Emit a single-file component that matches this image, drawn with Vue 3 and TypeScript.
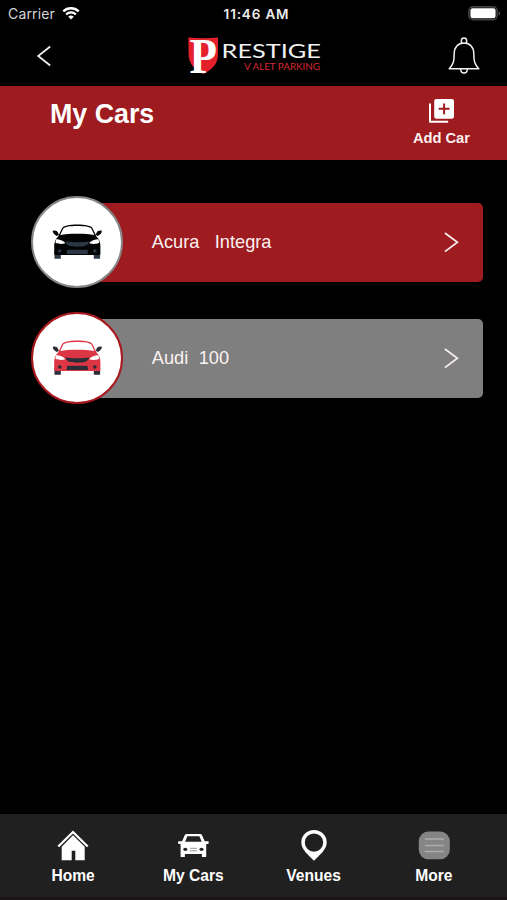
<script setup lang="ts">
interface Car {
  id: number
  make: string
  model: string
  gap: number
  variant: 'red' | 'gray'
  body: string
  trim: string
  detail: string
}

const cars: Car[] = [
  { id: 1, make: 'Acura', model: 'Integra', gap: 15.5, variant: 'red', body: '#020305', trim: '#2c3745', detail: '#020305' },
  { id: 2, make: 'Audi', model: '100', gap: 10.5, variant: 'gray', body: '#dc3543', trim: '#2b2d38', detail: '#2b2d38' },
]

type TabIcon = 'home' | 'car' | 'pin' | 'more'
const tabs: { label: string; icon: TabIcon }[] = [
  { label: 'Home', icon: 'home' },
  { label: 'My Cars', icon: 'car' },
  { label: 'Venues', icon: 'pin' },
  { label: 'More', icon: 'more' },
]
</script>

<template>
  <div class="screen">
    <div class="status">
      <div class="carrier">
        <span>Carrier</span>
        <svg width="18" height="13" viewBox="0 0 18 13">
          <path d="M1.300 4.400a11 11 0 0 1 15.400 0" fill="none" stroke="#fff" stroke-width="2.300" />
          <path d="M4.100 7.400a7 7 0 0 1 9.800 0" fill="none" stroke="#fff" stroke-width="2.100" />
          <path d="M9 12.600 6.200 9.800a4 4 0 0 1 5.600 0z" fill="#fff" />
        </svg>
      </div>
      <time class="clock">11:46 AM</time>
      <svg class="battery" width="33" height="15" viewBox="0 0 33 15">
        <rect x=".9" y=".9" width="28.200" height="12.800" rx="4" fill="none" stroke="#414143" stroke-width="1.600" />
        <rect x="2.400" y="2.300" width="25.200" height="10" rx="2.200" fill="#fff" />
        <path d="M30.600 5.200c2 .8 2 3.600 0 4.400z" fill="#5c5c5e" />
      </svg>
    </div>

    <header class="header">
      <button class="icon-btn back" aria-label="Back">
        <svg width="16" height="22" viewBox="0 0 16 22">
          <path d="M14.200 1.500 2.200 11l12 9.500" fill="none" stroke="#f4f4f4" stroke-width="1.700" />
        </svg>
      </button>
      <svg class="logo" width="136" height="40" viewBox="0 0 136 40">
        <path d="M1.300 1.500Q16 2.800 31 1.500V18C31 28 25 34 16 38 7 34 2 27 1.600 19z" fill="#e3202b" />
        <text class="logo-p" x="2.400" y="37" textLength="27.500" lengthAdjust="spacingAndGlyphs">P</text>
        <text class="logo-name" x="34.500" y="22.300" textLength="99.500" lengthAdjust="spacingAndGlyphs">RESTIGE</text>
        <text class="logo-sub" x="57" y="34" textLength="76" lengthAdjust="spacingAndGlyphs">V ALET PARKING</text>
      </svg>
      <button class="icon-btn bell" aria-label="Notifications">
        <svg width="34" height="40" viewBox="0 0 34 40" fill="none" stroke="#f2f2f2" stroke-width="1.500">
          <path d="M14.400 7.200V4.500a2.600 2.600 0 0 1 5.200 0v2.700" />
          <path d="M2.200 32.800C6.300 28.500 7.200 25.500 7.200 17.500c0-6.200 3.800-10.500 9.800-10.500s9.800 4.300 9.800 10.500c0 8 .9 11 5 15.300z" stroke-linejoin="round" />
          <path d="M13.700 33c0 5.400 6.600 5.400 6.600 0" />
        </svg>
      </button>
    </header>

    <section class="title-bar">
      <h1>My Cars</h1>
      <button class="add">
        <svg width="26" height="26" viewBox="0 0 26 26">
          <path d="M2 5.500v18.200h18.200" fill="none" stroke="#fff" stroke-width="2" stroke-linejoin="round" />
          <rect x="6.200" y=".9" width="19.800" height="19.800" rx="2.200" fill="#fff" />
          <path d="M16.100 5.400v10.800M10.700 10.800h10.800" stroke="#9e1b1f" stroke-width="2" />
        </svg>
        <span>Add Car</span>
      </button>
    </section>

    <main class="list">
      <article v-for="car in cars" :key="car.id" class="car" :class="car.variant">
        <div class="avatar">
          <svg width="52" height="38" viewBox="0 0 52 38">
            <g transform="translate(1.300 1.200)">
              <path d="M2.200 27.500h6.300v7H2.200zM41.500 27.500h6.300v7h-6.300z" :fill="car.trim" />
              <path d="M.4 6.700c1.800-.9 4.700 0 5.300 1.900l.9 1.900-2.200 1.200C2.500 10.200.6 9.200.4 6.700zM49.600 6.700c-1.800-.9-4.700 0-5.300 1.900l-.9 1.900 2.200 1.200c1.900-1.500 3.800-2.500 4-5z" :fill="car.detail" />
              <path d="M5.800 12.200 9.600 4.300C10.800 1.500 17 .4 25 .4s14.200 1.100 15.400 3.900L44.200 12.200c2.600 2.600 3.900 5.600 3.900 9.300v7.700c0 1-.7 1.600-1.700 1.600H3.600c-1 0-1.700-.6-1.700-1.600v-7.700c0-3.700 1.300-6.700 3.900-9.300z" :fill="car.body" />
              <path d="M7.900 10.800 11 4.400C12.200 2.300 18 1.700 25 1.700s12.800.6 14 2.700l3.100 6.400c-4-.8-10.200-1.200-17.100-1.200s-13.100.4-17.100 1.200z" fill="#fff" />
              <path d="M3.800 15.100c3.600.2 7.700 1.400 9.200 4-3.200.9-7.300.8-9.900-.6zM46.200 15.100c-3.600.2-7.700 1.400-9.200 4 3.200.9 7.300.8 9.900-.6z" fill="#fff" />
              <path d="M13 17.300c6 1 18 1 24 0-1.200 3.600-4 5.200-12 5.200s-10.800-1.600-12-5.200z" :fill="car.trim" />
              <path d="M14.800 25.500h20.400l.5 4.200H14.300z" :fill="car.trim" />
              <circle cx="7.500" cy="26.800" r="1.800" :fill="car.trim" />
              <circle cx="42.500" cy="26.800" r="1.800" :fill="car.trim" />
            </g>
          </svg>
        </div>
        <p class="name" :style="{ gap: car.gap + 'px' }">
          <span>{{ car.make }}</span><span>{{ car.model }}</span>
        </p>
        <svg class="chevron" width="16" height="22" viewBox="0 0 16 22">
          <path d="M1.900 2 14.400 11.300 1.900 20.600" fill="none" stroke="#f8eeee" stroke-width="1.700" />
        </svg>
      </article>
    </main>

    <nav class="tabs">
      <a v-for="tab in tabs" :key="tab.label" class="tab">
        <svg v-if="tab.icon === 'home'" width="32" height="32" viewBox="0 0 32 32">
          <path d="M1.300 17.500 16 3 30.700 17.500" fill="none" stroke="#fff" stroke-width="2.300" />
          <path d="M16 6.300 27.700 17.800V31.300H18.300v-9.500h-3.600v9.500H4.700V17.800z" fill="#fff" />
        </svg>
        <svg v-else-if="tab.icon === 'car'" width="32" height="32" viewBox="0 0 32 32">
          <g transform="translate(.4 1)">
            <path d="M9.300 4h13.400c1 0 1.700.5 2.100 1.500l2.500 5.700h3.200c1.200 0 1.200 2.800 0 2.800h-1.700v12.700c0 .5-4.300.5-4.300 0V24H7.500v2.700c0 .5-4.300.5-4.300 0V14H1.500c-1.200 0-1.200-2.800 0-2.800h3.200L7.200 5.500c.4-1 1.100-1.500 2.100-1.500z" fill="#fff" />
            <path d="M10 6.300h12l2.300 5.500H7.700z" fill="#202020" />
            <ellipse cx="7.900" cy="19.300" rx="2" ry="1.600" fill="#202020" />
            <ellipse cx="24.100" cy="19.300" rx="2" ry="1.600" fill="#202020" />
            <path d="M12.500 18.300h7M12.500 20.800h7" stroke="#999" stroke-width="1" />
          </g>
        </svg>
        <svg v-else-if="tab.icon === 'pin'" width="32" height="32" viewBox="0 0 32 32">
          <path fill-rule="evenodd" d="M16 .9A12.700 12.700 0 0 1 28.700 13.600C28.700 20.900 21 26.600 16 31.700 11 26.600 3.300 20.900 3.300 13.600A12.700 12.700 0 0 1 16 .9zM16 4.400a9.200 9.200 0 1 0 0 18.400A9.200 9.200 0 0 0 16 4.400z" fill="#fff" />
        </svg>
        <svg v-else width="32" height="32" viewBox="0 0 32 32">
          <rect x=".8" y="2.600" width="31" height="27.600" rx="9.500" fill="#858585" />
          <path d="M6.800 10.100h19M6.800 16.400h19M6.800 22.600h19" stroke="#adadad" stroke-width="1.500" />
        </svg>
        <span>{{ tab.label }}</span>
      </a>
    </nav>
  </div>
</template>

<style>
body {
  margin: 0;
  background: #000;
}
</style>

<style scoped>
.screen {
  display: flex;
  flex-direction: column;
  width: 507px;
  height: 900px;
  overflow: hidden;
  background: #000;
  color: #fff;
  font-family: "Liberation Sans", Arial, sans-serif;
}

svg {
  display: block;
  flex: none;
}

button {
  padding: 0;
  border: 0;
  background: none;
  color: inherit;
  font: inherit;
}

.status {
  display: grid;
  grid-template-columns: 1fr auto 1fr;
  align-items: center;
  height: 26px;
  padding: 0 6px 0 8px;
  font-family: Inter, sans-serif;
  font-size: 14px;
}

.carrier {
  display: flex;
  align-items: center;
  gap: 7px;
  color: #d6d6d6;
}

.carrier span {
  width: 47px;
  padding-top: 1px;
  letter-spacing: 0.15px;
  white-space: nowrap;
}

.clock {
  padding: 2px 0 0 4px;
  color: #ececec;
  font-size: 13.5px;
  font-weight: 600;
  letter-spacing: 0.85px;
}

.battery {
  justify-self: end;
}

.header {
  display: flex;
  align-items: center;
  justify-content: space-between;
  height: 60px;
  padding: 0 26px 0 36px;
}

.logo {
  margin-left: 11px;
  overflow: visible;
}

.logo-p {
  fill: #fff;
  font-family: "Liberation Serif", serif;
  font-size: 51px;
  font-weight: 700;
}

.logo-name {
  fill: #f1f1f1;
  font-family: Lato, sans-serif;
  font-size: 20px;
}

.logo-sub {
  fill: #d92832;
  font-family: Lato, sans-serif;
  font-size: 9.5px;
}

.title-bar {
  display: flex;
  flex: none;
  justify-content: space-between;
  box-sizing: border-box;
  height: 74px;
  padding: 12px 37px 0 50px;
  background: #9e1b1f;
}

h1 {
  margin: 0;
  font-size: 26.8px;
  line-height: 32px;
}

.add {
  display: flex;
  flex-direction: column;
  align-items: center;
  gap: 6px;
  color: #fcf0f0;
  font-size: 14.7px;
  font-weight: 700;
  line-height: 17px;
}

.list {
  display: flex;
  flex: 1;
  flex-direction: column;
  gap: 24px;
  padding: 36px 24.5px 0 31px;
}

.car {
  position: relative;
  display: flex;
  align-items: center;
  height: 92px;
  padding-right: 24px;
}

.red {
  --card: #9e1b1f;
  --ring: #858585;
}

.gray {
  --card: #7f7f7f;
  --ring: #a8191f;
}

.car::before {
  content: "";
  position: absolute;
  inset: 6.5px 0 6px 60px;
  border-radius: 5px;
  background: var(--card);
}

.avatar {
  position: relative;
  display: grid;
  place-items: center;
  box-sizing: border-box;
  width: 92px;
  height: 92px;
  border: 2px solid var(--ring);
  border-radius: 50%;
  background: #fff;
}

.name {
  position: relative;
  display: flex;
  flex: 1;
  margin: 1px 0 0 28.8px;
  color: #fbf2f2;
  font-size: 18.2px;
}

.chevron {
  position: relative;
}

.tabs {
  display: flex;
  box-sizing: border-box;
  height: 86px;
  padding: 15px 13px 0;
  border-bottom: 3px solid #1b1517;
  background: #202020;
}

.tab {
  display: flex;
  flex: 1;
  flex-direction: column;
  align-items: center;
  gap: 5px;
  font-size: 15.6px;
  font-weight: 700;
  line-height: 19px;
}
</style>
